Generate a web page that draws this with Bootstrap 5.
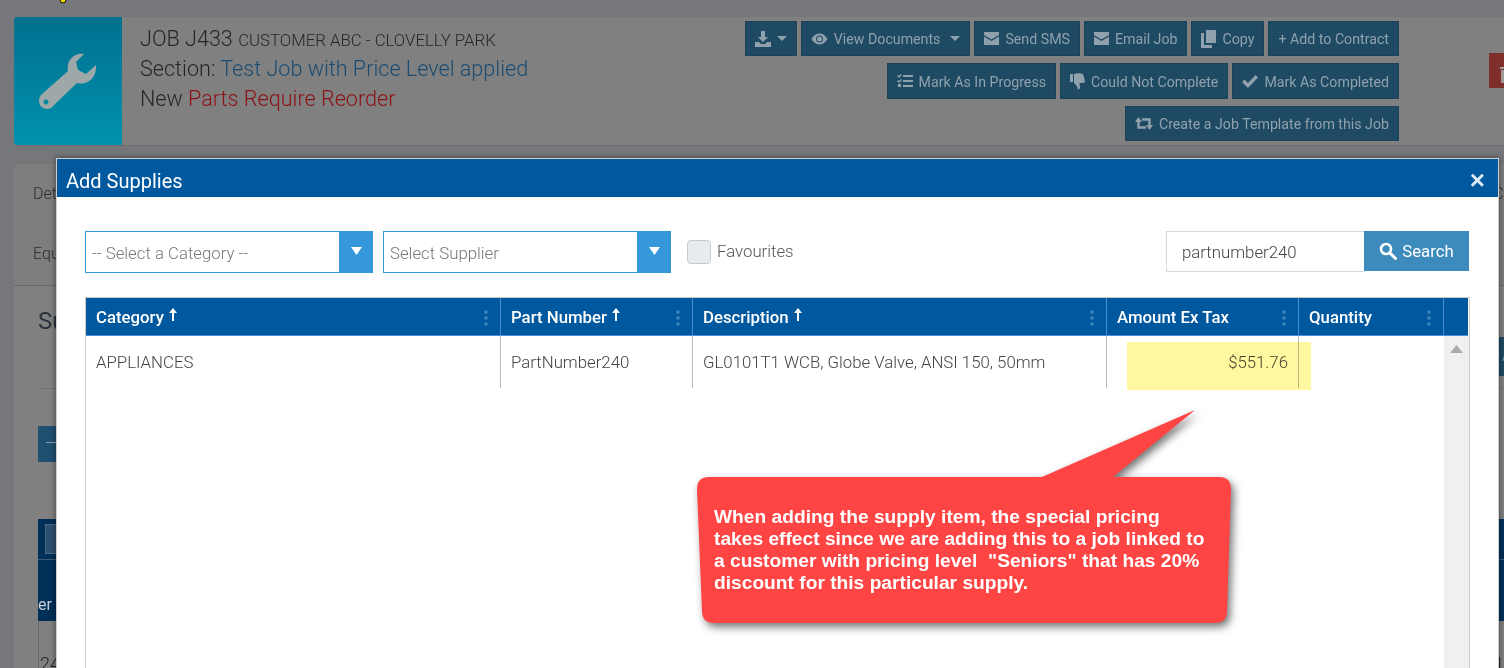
<!DOCTYPE html>
<html lang="en">
<head>
    <meta charset="UTF-8">
    <meta name="viewport" content="width=device-width, initial-scale=1.0">
    <title>Add Supplies</title>
    <link href="https://cdn.jsdelivr.net/npm/bootstrap@5.3.0/dist/css/bootstrap.min.css" rel="stylesheet">
    <style>
        html, body { height: 668px; overflow: hidden; }
        body { background: #76777b; font-family: Roboto, "Liberation Sans", sans-serif; font-weight: 300; color: #333; position: relative; }

        /* dimmed page behind the modal */
        .top-strip { height: 17px; position: relative; }
        .top-strip svg { position: absolute; left: 56px; top: 0; }
        .job-card { margin-left: 14px; height: 129px; background: #808080; border-bottom: 1px solid #6e6e6e; border-radius: 3px 0 0 3px; }
        .job-icon { width: 108px; height: 128px; flex-shrink: 0; border-radius: 3px 0 0 3px; background: linear-gradient(#00708e, #0092b0); }
        .job-text { padding: 7px 0 0 18px; font-size: 21.6px; line-height: 30px; color: #262626; min-width: 0; }
        .job-text small { font-size: 16.8px; line-height: 1; text-transform: uppercase; }
        .job-link { color: #1a4c72; }
        .job-warn { color: #8c1216; }
        .job-actions { flex-shrink: 0; padding-top: 4px; padding-right: 1px; }
        .job-row { margin-bottom: 7px; }
        .dim-btn { height: 35px; padding: 3px 9px 0 9px; border-radius: 0; border: 1px solid #1c4158; background: #1f4a63; color: #8fa1ad; font-size: 14.2px; font-weight: 400; display: inline-flex; align-items: center; gap: 6px; white-space: nowrap; }
        .dim-btn svg { fill: #8fa1ad; flex-shrink: 0; margin-top: -3px; }
        .dim-tall { height: 36px; padding-top: 3px; }
        .dim-btn svg.swap-icon { fill: none; stroke: #8fa1ad; stroke-width: 2.4; }
        .trash-btn { width: 15px; height: 35px; margin: 36px 0 0 89px; flex-shrink: 0; background: #7f2f2b; overflow: hidden; padding: 8px 0 0 10px; }
        .tabs-card { margin: 18px 0 0 14px; height: 122px; background: #7e7e7e; border-radius: 4px 0 0 0; border-bottom: 1px solid #6a6a6a; font-size: 16px; color: #2c2c2c; }
        .tabs-line { height: 60px; padding: 0 0 0 19px; align-items: center; }
        .sec-card { margin-left: 14px; background: #808080; height: 400px; padding-left: 24px; }
        .sec-head { height: 103px; border-bottom: 1px solid #747474; }
        .sec-title { font-size: 24px; font-weight: 400; color: #29323c; padding-top: 17px; }
        .sec-add { height: 39px; margin-top: 51px; width: 60px; background: #1f4a63; color: #8fa1ad; font-size: 14px; padding: 9px 0 0 4px; margin-right: -54px; }
        .sec-pick { width: 120px; height: 36px; margin-top: 37px; background: #1f5070; color: #9fb2bf; padding: 6px 7px; }
        .sec-table { margin-top: 57px; height: 102px; background: #002f57; }
        .sec-tool { height: 41px; border-bottom: 1px solid #3a5a78; padding: 5px 0 0 7px; }
        .sec-tool span { display: block; width: 40px; height: 30px; background: #2d5070; border: 1px solid #4d6a85; }
        .sec-col { height: 60px; padding: 35px 0 0 0; color: #c9ced4; font-size: 16px; font-weight: 400; line-height: 20px; }
        .sec-foot { font-size: 18px; color: #222; padding-top: 29px; border-left: 1px solid #6a6a6a; padding-left: 1px; }

        /* modal */
        .supply-modal { position: absolute; left: 56px; top: 158px; width: 1443px; height: 540px; background: #fff; border: 1px solid #cfcfcf; border-radius: 0; box-shadow: 0 0 6px rgba(0,0,0,.5); }
        .supply-head { height: 38px; background: #00589f; color: #fff; padding: 0 13px 0 9px; border: 0; border-radius: 0; }
        .supply-title { font-size: 20px; font-weight: 400; line-height: 1; margin: 6px 0 0 0; }
        .supply-close { font-size: 26px; line-height: 1; font-weight: 700; color: #dce9f4; background: none; border: 0; padding: 4px 0 0 0; font-family: "Liberation Sans", sans-serif; }
        .supply-body { padding: 34px 28px 0 28px; }
        .pick-box { width: 288px; height: 42px; border: 1px solid #3498db; font-size: 16.8px; color: #777; padding-left: 6px; }
        .pick-box > span:first-child { padding-top: 3px; }
        .pick-gap { margin-right: 10px; }
        .pick-arrow { width: 34px; height: 42px; margin: -1px -1px -1px auto; background: #3498db; padding-top: 16px; text-align: center; }
        .fav-wrap { margin-left: 8px; padding-top: 8px; }
        .fav-check { width: 24px; height: 24px; margin: 0 6px 0 8px; background: #e9ecef; border: 1px solid #c3cad3; border-radius: 4px; float: none; }
        .fav-label { font-size: 16.8px; color: #555; }
        .search-group { width: 304px; flex: none; }
        .search-group .form-control { width: 199px; flex: none; height: 41px; border-radius: 0; border: 1px solid #d3d9e2; padding: 0 14px 0 15px; font-size: 16.8px; font-weight: 300; color: #444; }
        .search-btn { width: 105px; height: 40px; padding-top: 8px; background: #3d8bbd; border: 0; border-radius: 0; color: #fff; font-size: 16.8px; font-weight: 400; display: flex; align-items: center; justify-content: center; gap: 5px; }
        .search-btn svg { margin-top: -2px; }
        .sup-grid { margin-top: 24px; height: 400px; border: 1px solid #ccc; border-bottom: 0; }
        .sup-cols { display: grid; grid-template-columns: 415px 192px 414px 192px 145px 24px; }
        .sup-th { height: 38px; background: #00589f; color: #fff; font-size: 16.8px; font-weight: 500; padding: 2px 10px 0 10px; border-right: 1px solid #4a8fd0; border-bottom: 1px solid #4a8fd0; display: flex; align-items: center; gap: 5px; }
        .sup-th:last-child { border-right: 0; }
        .sup-th .sort-up { transform: translateY(-3px); }
        .sup-th .kebab { margin-left: auto; margin-right: 2px; }
        .sup-td { height: 52px; font-size: 16.8px; color: #444; padding: 1px 10px 0 10px; border-right: 1px solid #bbb; display: flex; align-items: center; white-space: nowrap; }
        .sup-body { height: 360px; position: relative; }
        .sup-scroll { position: absolute; right: 0; top: 0; bottom: 0; width: 25px; background: #f0f0f0; padding: 9px 0 0 6px; }

        /* annotations drawn on the screenshot */
        .price-mark { position: absolute; left: 1127px; top: 342px; width: 184px; height: 48px; background: #fff8a0; mix-blend-mode: multiply; }
        .callout { position: absolute; left: 697px; top: 477px; width: 534px; height: 146px; padding: 29px 17px 0 17px; color: #fff; font-family: "Liberation Sans", Arial, sans-serif; font-weight: 700; font-size: 19.2px; line-height: 22px; }
        .callout svg { position: absolute; left: 0; top: 0; overflow: visible; filter: drop-shadow(3px 4px 4px rgba(0,0,0,.55)); }
        .callout-text { position: relative; white-space: pre; }
    </style>
</head>
<body>
    <div class="top-strip">
        <svg width="12" height="6" viewBox="0 0 12 6"><circle cx="7" cy="0" r="3" fill="#e8d800" stroke="#111"/></svg>
    </div>

    <!-- Pagina detras del modal -->
    <div class="job-card d-flex">
        <div class="job-icon d-flex align-items-center justify-content-center">
            <svg width="58" height="57" viewBox="0 0 58 57"><path fill="#9fa8a8" fill-rule="evenodd" d="M45 1C36-1 27 7 29 18L2 42C-2 47 0 55 8 56 10 56 13 55 15 52L38 30C49 33 58 24 57 12L47 21 39 17 37 9ZM7 46.500a2.500 2.500 0 1 0 .01 0Z"/></svg>
        </div>
        <div class="job-text flex-grow-1">
            <div>JOB J433 <small>Customer ABC - Clovelly Park</small></div>
            <div>Section: <span class="job-link">Test Job with Price Level applied</span></div>
            <div>New <span class="job-warn">Parts Require Reorder</span></div>
        </div>
        <div class="job-actions">
            <div class="job-row d-flex justify-content-end gap-1">
                <button class="btn dim-btn">
                    <svg width="16" height="16" viewBox="0 0 16 16"><path d="M6 0h4v6h3l-5 5-5-5h3zM0 11h4l2 2h4l2-2h4v5H0z"/></svg>
                    <svg width="10" height="5" viewBox="0 0 10 5"><path d="M0 0h10L5 5z"/></svg>
                </button>
                <button class="btn dim-btn">
                    <svg width="17" height="16" viewBox="0 0 16 16"><path d="M10.500 8a2.500 2.500 0 1 1-5 0 2.500 2.500 0 0 1 5 0z"/><path d="M0 8s3-5.500 8-5.500S16 8 16 8s-3 5.500-8 5.500S0 8 0 8zm8 3.500a3.500 3.500 0 1 0 0-7 3.500 3.500 0 0 0 0 7z"/></svg>
                    View Documents
                    <svg width="10" height="5" viewBox="0 0 10 5" class="ms-1"><path d="M0 0h10L5 5z"/></svg>
                </button>
                <button class="btn dim-btn">
                    <svg width="15" height="13" viewBox="0 0 15 13"><path d="M0 0h15v3L7.500 7.500 0 3zM0 4.500l7.500 4.500L15 4.500V13H0z"/></svg>
                    Send SMS
                </button>
                <button class="btn dim-btn">
                    <svg width="15" height="13" viewBox="0 0 15 13"><path d="M0 0h15v3L7.500 7.500 0 3zM0 4.500l7.500 4.500L15 4.500V13H0z"/></svg>
                    Email Job
                </button>
                <button class="btn dim-btn">
                    <svg width="15" height="18" viewBox="0 0 15 18"><path d="M5 0h10v13H5z"/><path d="M3 3v12h8v3H0V3z"/></svg>
                    Copy
                </button>
                <button class="btn dim-btn">+ Add to Contract</button>
            </div>
            <div class="job-row d-flex justify-content-end gap-1">
                <button class="btn dim-btn dim-tall">
                    <svg width="16" height="14" viewBox="0 0 16 14"><path d="M6 1h10v2H6zM6 6h10v2H6zM6 11h10v2H6zM0 2l1-1 1 1 2-2 1 1-3 3zM0 7l1-1 1 1 2-2 1 1-3 3zM1 10h3v3H1z"/></svg>
                    Mark As In Progress
                </button>
                <button class="btn dim-btn dim-tall">
                    <svg width="15" height="17" viewBox="0 0 15 17"><path d="M0 1h3v8H0zM4 1c3-1 6-1 9 0l2 7c0 1-1 2-2 2H9.500l.5 5-2 2-1-4-3-3z"/></svg>
                    Could Not Complete
                </button>
                <button class="btn dim-btn dim-tall">
                    <svg width="16" height="13" viewBox="0 0 16 13"><path d="M0 7l2.500-2.500L6 8l7.500-8L16 2.500 6 13z"/></svg>
                    Mark As Completed
                </button>
            </div>
            <div class="job-row d-flex justify-content-end">
                <button class="btn dim-btn">
                    <svg class="swap-icon" width="18" height="13" viewBox="0 0 18 13"><path d="M3.500 4v6.500H11M14.500 9V2.500H7"/><path stroke="none" fill="#8fa1ad" d="M3.500 0L7 5H0zM14.500 13L11 8h7z"/></svg>
                    Create a Job Template from this Job
                </button>
            </div>
        </div>
        <div class="trash-btn">
            <svg width="16" height="18" viewBox="0 0 16 18"><path fill="#a09a98" d="M1 2h4V0h6v2h4v2H1zM2 5h12v13H2z"/></svg>
        </div>
    </div>

    <div class="tabs-card">
        <div class="tabs-line d-flex justify-content-between"><span>Det</span><span>C</span></div>
        <div class="tabs-line d-flex"><span>Equ</span></div>
    </div>
    <div class="sec-card">
        <div class="sec-head d-flex justify-content-between">
            <div class="sec-title">Su</div>
            <div class="sec-add">Ad</div>
        </div>
        <div class="sec-pick">—</div>
        <div class="sec-table">
            <div class="sec-tool"><span></span></div>
            <div class="sec-col">er</div>
        </div>
        <div class="sec-foot d-flex justify-content-between"><span>24</span><span>1</span></div>
    </div>

    <!-- Modal de suministros -->
    <div class="supply-modal">
        <div class="supply-head d-flex align-items-center justify-content-between">
            <h5 class="supply-title">Add Supplies</h5>
            <button type="button" class="supply-close">×</button>
        </div>
        <div class="supply-body">
            <div class="d-flex align-items-start">
                <div class="pick-box pick-gap d-flex align-items-center">
                    <span>-- Select a Category --</span>
                    <span class="pick-arrow"><svg width="11" height="8" viewBox="0 0 12 10" preserveAspectRatio="none" class="d-block mx-auto"><path fill="#fff" d="M0 0h12L6 10z"/></svg></span>
                </div>
                <div class="pick-box d-flex align-items-center">
                    <span>Select Supplier</span>
                    <span class="pick-arrow"><svg width="11" height="8" viewBox="0 0 12 10" preserveAspectRatio="none" class="d-block mx-auto"><path fill="#fff" d="M0 0h12L6 10z"/></svg></span>
                </div>
                <div class="fav-wrap d-flex align-items-center">
                    <input class="form-check-input fav-check" type="checkbox" id="favs">
                    <label class="fav-label" for="favs">Favourites</label>
                </div>
                <div class="input-group search-group ms-auto flex-nowrap align-items-start">
                    <input type="text" class="form-control" value="partnumber240">
                    <button class="btn search-btn">
                        <svg width="18" height="18" viewBox="0 0 18 18"><circle cx="7" cy="7" r="5" fill="none" stroke="#fff" stroke-width="2.600"/><path d="M11 11l5.500 5.500" stroke="#fff" stroke-width="3" stroke-linecap="round"/></svg>
                        Search
                    </button>
                </div>
            </div>

            <div class="sup-grid">
                <div class="sup-cols">
                    <div class="sup-th">Category
                        <svg class="sort-up" width="8" height="14" viewBox="0 0 8 14"><path fill="#fff" d="M4 0l4 5H5v8H3V5H0z"/></svg>
                        <svg class="kebab" width="4" height="16" viewBox="0 0 4 16"><g fill="#3f86bb"><circle cx="2" cy="2" r="1.800"/><circle cx="2" cy="8" r="1.800"/><circle cx="2" cy="14" r="1.800"/></g></svg>
                    </div>
                    <div class="sup-th">Part Number
                        <svg class="sort-up" width="8" height="14" viewBox="0 0 8 14"><path fill="#fff" d="M4 0l4 5H5v8H3V5H0z"/></svg>
                        <svg class="kebab" width="4" height="16" viewBox="0 0 4 16"><g fill="#3f86bb"><circle cx="2" cy="2" r="1.800"/><circle cx="2" cy="8" r="1.800"/><circle cx="2" cy="14" r="1.800"/></g></svg>
                    </div>
                    <div class="sup-th">Description
                        <svg class="sort-up" width="8" height="14" viewBox="0 0 8 14"><path fill="#fff" d="M4 0l4 5H5v8H3V5H0z"/></svg>
                        <svg class="kebab" width="4" height="16" viewBox="0 0 4 16"><g fill="#3f86bb"><circle cx="2" cy="2" r="1.800"/><circle cx="2" cy="8" r="1.800"/><circle cx="2" cy="14" r="1.800"/></g></svg>
                    </div>
                    <div class="sup-th">Amount Ex Tax
                        <svg class="kebab" width="4" height="16" viewBox="0 0 4 16"><g fill="#3f86bb"><circle cx="2" cy="2" r="1.800"/><circle cx="2" cy="8" r="1.800"/><circle cx="2" cy="14" r="1.800"/></g></svg>
                    </div>
                    <div class="sup-th">Quantity
                        <svg class="kebab" width="4" height="16" viewBox="0 0 4 16"><g fill="#3f86bb"><circle cx="2" cy="2" r="1.800"/><circle cx="2" cy="8" r="1.800"/><circle cx="2" cy="14" r="1.800"/></g></svg>
                    </div>
                    <div class="sup-th"></div>
                </div>
                <div class="sup-body">
                    <div class="sup-cols">
                        <div class="sup-td">APPLIANCES</div>
                        <div class="sup-td">PartNumber240</div>
                        <div class="sup-td">GL0101T1 WCB, Globe Valve, ANSI 150, 50mm</div>
                        <div class="sup-td justify-content-end">$551.76</div>
                    </div>
                    <div class="sup-scroll">
                        <svg width="13" height="8" viewBox="0 0 13 8" class="d-block"><path fill="#aaa" d="M6.500 0L13 8H0z"/></svg>
                    </div>
                </div>
            </div>
        </div>
    </div>

    <!-- Anotaciones sobre la captura -->
    <div class="price-mark"></div>
    <div class="callout">
        <svg width="534" height="146" viewBox="0 0 534 146"><path fill="#ff4444" d="M12 0H345L498-67 416 0H522Q534 0 534 12L530 134Q530 146 518 146H17Q5 146 5 134L0 12Q0 0 12 0Z"/></svg>
        <div class="callout-text">When adding the supply item, the special pricing
takes effect since we are adding this to a job linked to
a customer with pricing level  "Seniors" that has 20%
discount for this particular supply.</div>
    </div>

    <script src="https://cdn.jsdelivr.net/npm/bootstrap@5.3.0/dist/js/bootstrap.bundle.min.js"></script>
</body>
</html>
